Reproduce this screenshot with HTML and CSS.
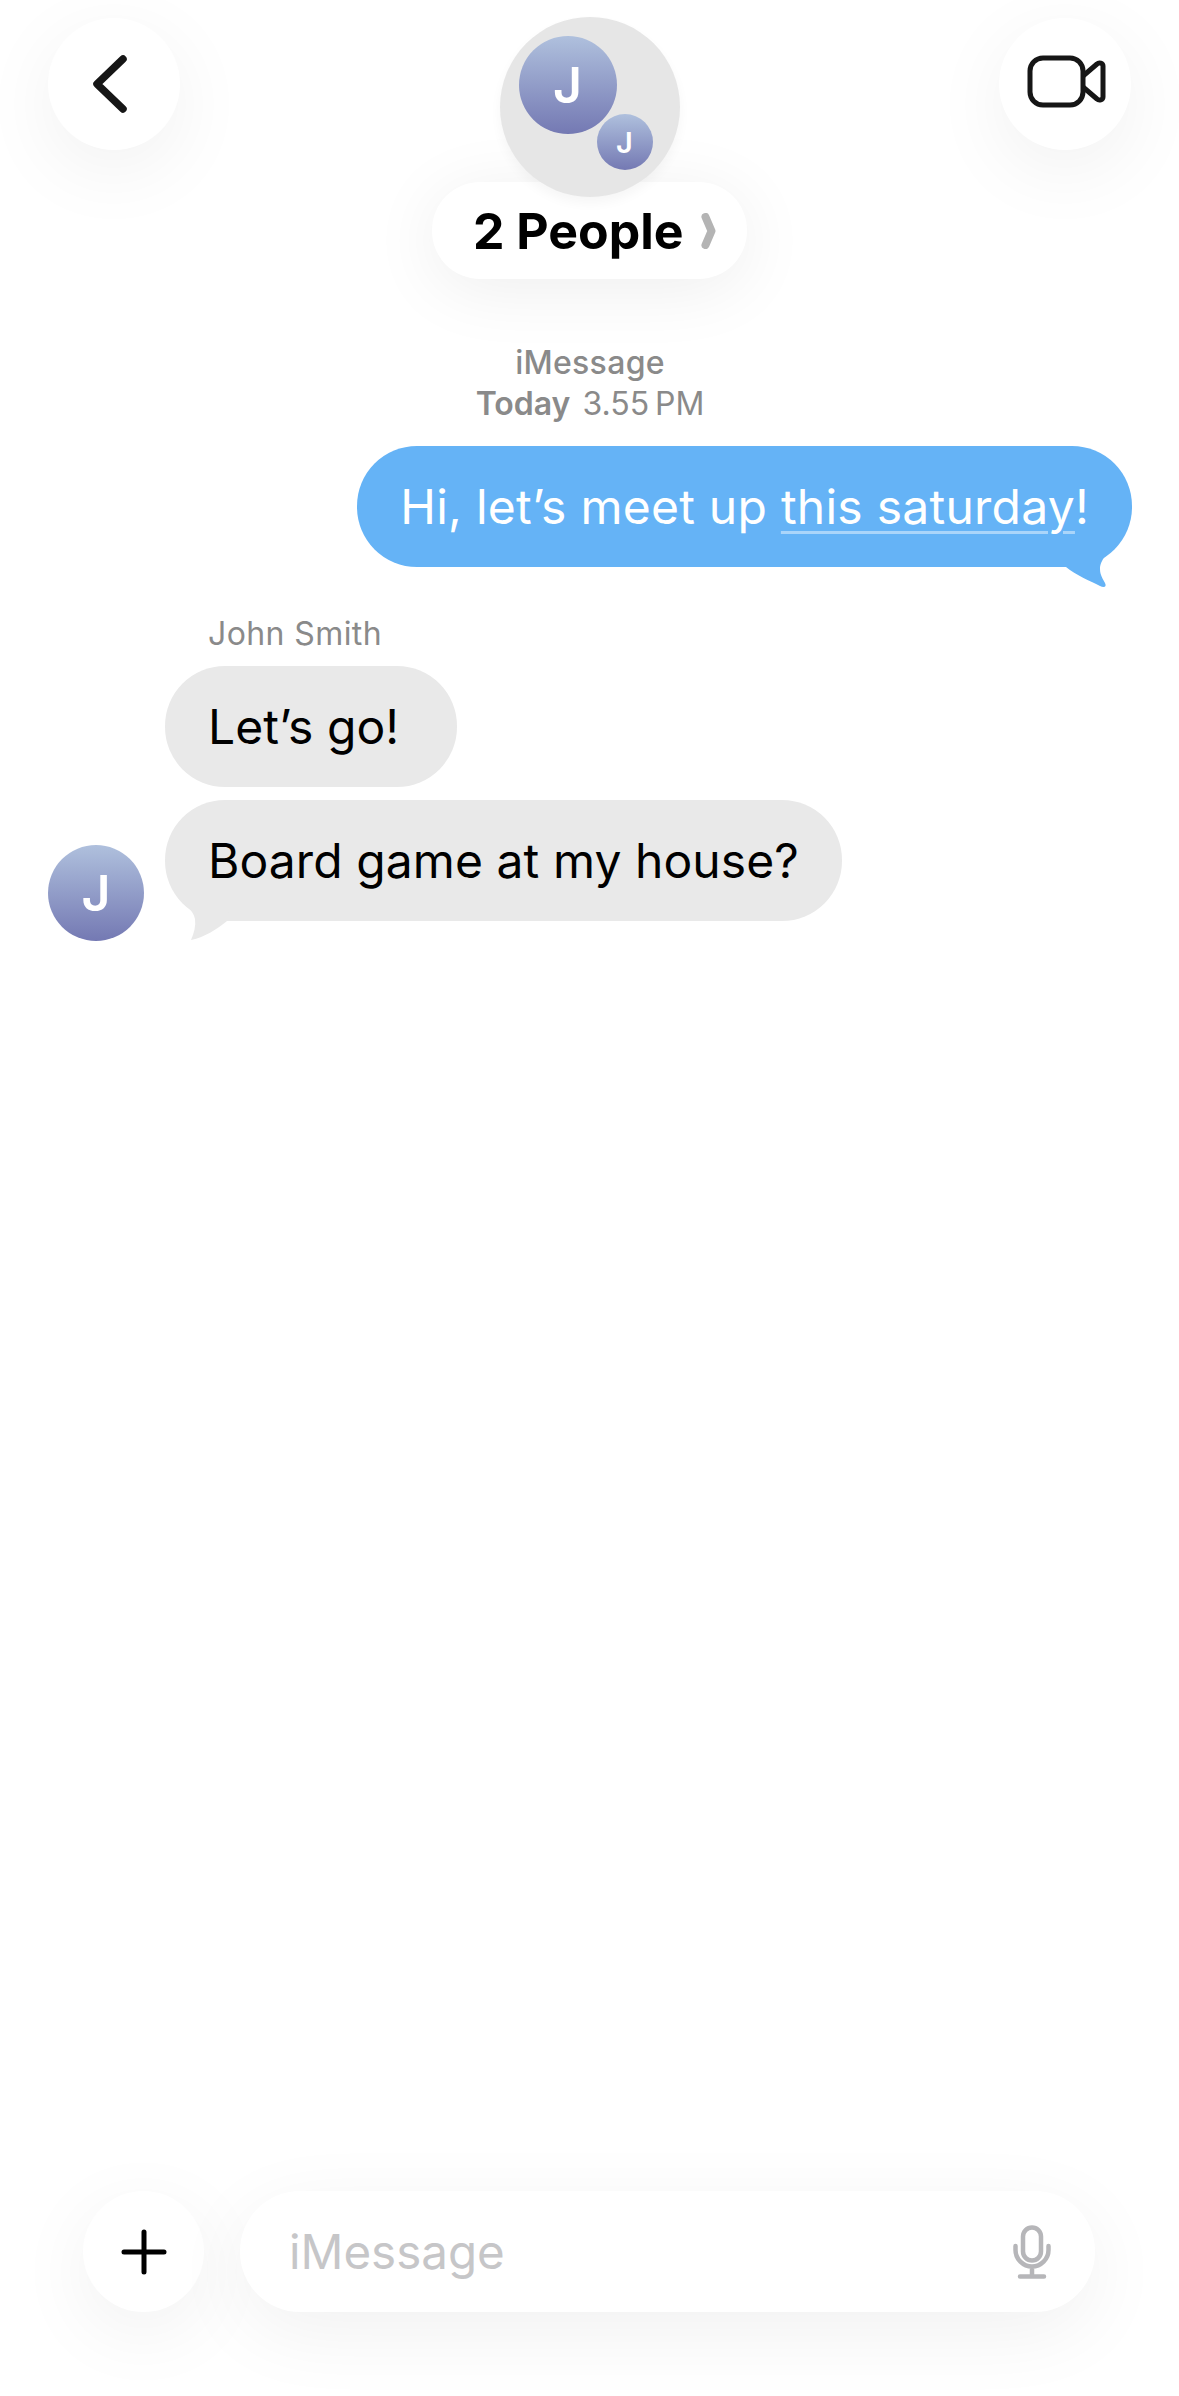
FILE: index.html
```html
<!DOCTYPE html>
<html lang="en">
<head>
  <meta charset="UTF-8">
  <title>Messages</title>
  <link rel="stylesheet" href="styles.css">
</head>
<body>
  <div class="screen">
    <header class="topbar">
      <button class="round-btn" type="button" aria-label="Back">
        <svg class="icon-back" viewBox="0 0 40 62" width="40" height="62">
          <path d="M33 6 L7 31 L33 56" />
        </svg>
      </button>

      <div class="contact">
        <div class="group-photo">
          <div class="avatar avatar-big">J</div>
          <div class="avatar avatar-small">J</div>
        </div>
        <div class="contact-pill">
          <span>2 People</span>
          <svg class="icon-more" viewBox="0 0 15 36" width="15" height="36">
            <path d="M4.500 4 L10.500 18 L4.500 32" />
          </svg>
        </div>
      </div>

      <button class="round-btn" type="button" aria-label="Video call">
        <svg class="icon-video" viewBox="0 0 80 54" width="80" height="54">
          <rect x="3" y="3" width="53" height="47" rx="13" />
          <path d="M56 21 L70 9 C72 7 76 8 76 11 V42 C76 45 72 46 70 44 L56 32" />
        </svg>
      </button>
    </header>

    <main class="thread">
      <div class="thread-meta">
        <div class="meta-service">iMessage</div>
        <div class="meta-time"><strong>Today</strong> 3.55&#8201;PM</div>
      </div>

      <div class="bubble bubble-out">
        <span>Hi, let’s meet up <span class="link">this saturday</span>!</span>
        <svg class="tail tail-out" viewBox="0 0 66 50" width="66" height="50">
          <path d="M54 0 C46 12 34 20 34 31 C34 37 37 41 39 45 C41 49 38 50 34 48 C24 43 10 37 0 29 L0 0 Z" />
        </svg>
      </div>

      <div class="sender">John Smith</div>
      <div class="incoming">
        <div class="avatar avatar-msg">J</div>
        <div class="incoming-list">
          <div class="bubble bubble-in bubble-short"><span>Let’s go!</span></div>
          <div class="bubble bubble-in">
            <span>Board game at my house?</span>
            <svg class="tail tail-in" viewBox="0 0 52 46" width="52" height="46">
              <path d="M0 0 C4 12 12 14 14 24 C15 31 13 38 10 45 C24 42 36 34 46 26 L52 0 Z" />
            </svg>
          </div>
        </div>
      </div>
    </main>

    <footer class="composer">
      <button class="round-btn plus-btn" type="button" aria-label="Add">
        <svg class="icon-plus" viewBox="0 0 46 46" width="46" height="46">
          <path d="M23 3 V43 M3 23 H43" />
        </svg>
      </button>
      <div class="message-input">
        <span class="placeholder">iMessage</span>
        <svg class="icon-mic" viewBox="0 0 38 54" width="38" height="54">
          <rect x="10" y="2.500" width="18" height="33" rx="9" />
          <path d="M2.500 21 V25 C2.500 34 10 41.500 19 41.500 C28 41.500 35.500 34 35.500 25 V21 M19 41.500 V51 M7 51.500 H31" />
        </svg>
      </div>
    </footer>
  </div>
</body>
</html>
```

FILE: styles.css
```css
* {
  box-sizing: border-box;
}
body {
  margin: 0;
  background: #fff;
  font-family: Inter, "Noto Sans", sans-serif;
  color: #000;
}
button {
  border: none;
  padding: 0;
  font: inherit;
}
.screen {
  width: 1179px;
  height: 2396px;
  display: flex;
  flex-direction: column;
  overflow: hidden;
}

/* top bar */
.topbar {
  display: flex;
  justify-content: space-between;
  align-items: flex-start;
  padding: 18px 48px 0;
}
.round-btn {
  width: 132px;
  height: 132px;
  flex: none;
  border-radius: 50%;
  background: #fff;
  box-shadow: 0 20px 80px rgba(0,0,0,0.06);
  display: flex;
  align-items: center;
  justify-content: center;
}
.icon-back path {
  fill: none;
  stroke: #161616;
  stroke-width: 7.500;
  stroke-linecap: round;
  stroke-linejoin: round;
}
.icon-back {
  margin: 0 8px 0 0;
}
.icon-video rect,
.icon-video path {
  fill: none;
  stroke: #161616;
  stroke-width: 5;
  stroke-linejoin: round;
}
.icon-video {
  margin: -4px 0 0 3px;
}
.contact {
  display: flex;
  flex-direction: column;
  align-items: center;
}
.group-photo {
  position: relative;
  z-index: 1;
  width: 180px;
  height: 180px;
  margin-top: -1px;
  border-radius: 50%;
  background: #e6e6e6;
  box-shadow: 0 6px 12px rgba(0,0,0,0.04);
}
.avatar {
  border-radius: 50%;
  background: linear-gradient(#afc0dd, #7479b3);
  color: #fff;
  font-weight: 600;
  display: flex;
  align-items: center;
  justify-content: center;
}
.avatar-big {
  position: absolute;
  left: 19px;
  top: 19px;
  width: 98px;
  height: 98px;
  font-size: 50px;
}
.avatar-small {
  position: absolute;
  left: 97px;
  top: 97px;
  width: 56px;
  height: 56px;
  font-size: 29px;
}
.contact-pill {
  width: 315px;
  height: 97px;
  margin-top: -15px;
  border-radius: 48px;
  background: #fff;
  box-shadow: 0 10px 70px rgba(0,0,0,0.07);
  display: flex;
  align-items: center;
  gap: 17px;
  padding-left: 41px;
  font-size: 50px;
  font-weight: 700;
}
.icon-more path {
  fill: none;
  stroke: #b4b4b4;
  stroke-width: 8;
  stroke-linecap: round;
  stroke-linejoin: round;
}

/* messages */
.thread {
  display: flex;
  flex-direction: column;
  padding: 0 47px 0 48px;
}
.thread-meta {
  margin-top: 63px;
  text-align: center;
  font-size: 32px;
  line-height: 41px;
  color: #8a8a8a;
}
.meta-service {
  font-weight: 500;
  letter-spacing: 0.3px;
}
.meta-time strong {
  font-weight: 600;
  margin-right: 3px;
}
.bubble {
  position: relative;
  height: 121px;
  border-radius: 60px;
  padding: 0 43px;
  display: flex;
  align-items: center;
  white-space: nowrap;
  font-size: 48px;
  width: fit-content;
}
.bubble-out {
  align-self: flex-end;
  margin-top: 22px;
  background: #65b3f6;
  color: #fff;
  letter-spacing: 0.25px;
}
.link {
  text-decoration: underline;
  text-decoration-color: rgba(255,255,255,0.45);
  text-decoration-thickness: 3px;
  text-underline-offset: 7px;
}
.tail {
  position: absolute;
}
.tail-out {
  right: 0;
  bottom: -21px;
}
.tail-out path {
  fill: #65b3f6;
}
.bubble-in {
  background: #e9e9e9;
  letter-spacing: 0.08px;
}
.bubble-short {
  padding-right: 58px;
}
.tail-in {
  left: 16px;
  bottom: -20px;
}
.tail-in path {
  fill: #e9e9e9;
}
.sender {
  margin: 49px 0 0 160px;
  font-size: 32px;
  line-height: 36px;
  color: #8a8a8a;
  letter-spacing: 0.4px;
}
.incoming {
  display: flex;
  align-items: flex-end;
  gap: 21px;
  margin-top: 14px;
}
.avatar-msg {
  width: 96px;
  height: 96px;
  flex: none;
  font-size: 50px;
}
.incoming-list {
  display: flex;
  flex-direction: column;
  gap: 13px;
  padding-bottom: 20px;
}

/* bottom bar */
.composer {
  display: flex;
  align-items: center;
  gap: 36px;
  margin-top: auto;
  padding: 0 84px 84px 83px;
}
.plus-btn {
  width: 121px;
  height: 121px;
}
.icon-plus path {
  fill: none;
  stroke: #000;
  stroke-width: 5;
  stroke-linecap: round;
}
.message-input {
  flex: 1;
  height: 121px;
  border-radius: 60px;
  background: #fff;
  box-shadow: 0 20px 80px rgba(0,0,0,0.06);
  display: flex;
  align-items: center;
  justify-content: space-between;
  padding: 0 44px 0 49px;
}
.placeholder {
  font-size: 47.500px;
  color: #c6c6c8;
}
.icon-mic rect,
.icon-mic path {
  fill: none;
  stroke: #b6b6b9;
  stroke-width: 4.500;
  stroke-linecap: round;
}
```
